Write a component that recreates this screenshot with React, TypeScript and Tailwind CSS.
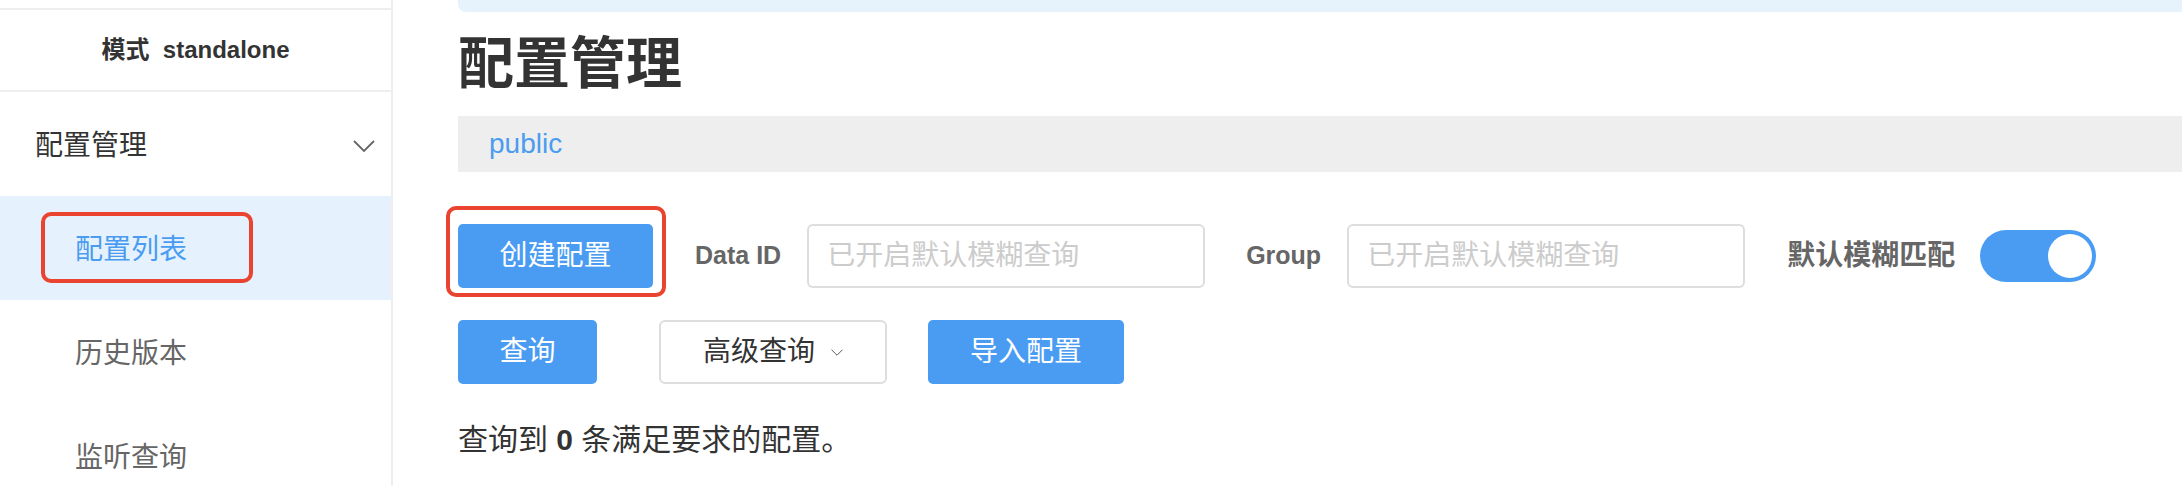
import React from 'react';

const cjk = { fontFamily: '"Liberation Sans", "Noto Sans CJK SC", sans-serif' };

function Chevron({ className }: { className?: string }) {
  return (
    <svg viewBox="0 0 22 12" className={className} fill="none">
      <polyline points="1,1 11,11 21,1" stroke="currentColor" strokeWidth="1.8" />
    </svg>
  );
}

function Sidebar() {
  return (
    <aside className="w-[393px] shrink-0 border-r-2 border-[#eee] h-[486px] overflow-hidden bg-white">
      <div className="h-[8px]" />
      <div className="h-[84px] border-y-2 border-[#eee] flex items-center justify-center text-[24px] font-bold text-[#333]">
        模式&nbsp;&nbsp;standalone
      </div>
      <div className="h-[104px] flex items-center justify-between pl-[35px] pr-[16px] pt-[4px] text-[28px] text-[#333]">
        <span>配置管理</span>
        <Chevron className="w-[22px] h-[12px] text-[#666]" />
      </div>
      <div className="relative h-[104px] flex items-center pl-[75px] pt-[4px] bg-[#e5f2fd] text-[28px] text-[#4a9cf0]">
        配置列表
        {/* annotation box */}
        <div className="absolute left-[41px] top-[16px] w-[212px] h-[71px] border-4 border-[#ea4330] rounded-[10px]" />
      </div>
      <div className="h-[104px] flex items-center pl-[75px] pt-[4px] text-[28px] text-[#666]">历史版本</div>
      <div className="h-[104px] flex items-center pl-[75px] pt-[4px] text-[28px] text-[#666]">监听查询</div>
    </aside>
  );
}

export default function App() {
  return (
    <div className="flex w-[2182px] h-[486px] overflow-hidden bg-white" style={cjk}>
      <Sidebar />

      <main className="flex-1 pl-[65px]">
        <div className="h-[12px] bg-[#e6f3fd] rounded-bl-[8px]" />

        <h1 className="mt-[24px] h-[56px] leading-[56px] text-[56px] font-bold text-[#333]">配置管理</h1>

        <div className="mt-[24px] h-[56px] flex items-center pl-[31px] bg-[#eee] text-[28px] text-[#4a9cf0]">
          public
        </div>

        {/* search row */}
        <div className="mt-[52px] flex items-center h-[64px]">
          <div className="relative">
            <button className="w-[195px] h-[64px] rounded-[5px] bg-[#4a9cf2] text-white text-[28px]">创建配置</button>
            <div className="absolute -left-[12px] -top-[18px] w-[220px] h-[91px] border-4 border-[#ea4330] rounded-[10px]" />
          </div>

          <span className="ml-[42px] mr-[26px] text-[25px] font-bold text-[#666]">Data ID</span>
          <div className="w-[398px] h-[64px] border-2 border-[#ddd] rounded-[6px] flex items-center pl-[18px] text-[28px] text-[#ccc]">
            已开启默认模糊查询
          </div>

          <span className="ml-[41px] mr-[26px] text-[25px] font-bold text-[#666]">Group</span>
          <div className="w-[398px] h-[64px] border-2 border-[#ddd] rounded-[6px] flex items-center pl-[18px] text-[28px] text-[#ccc]">
            已开启默认模糊查询
          </div>

          <span className="ml-[42px] mr-[25px] text-[28px] font-bold text-[#666]">默认模糊匹配</span>
          <div className="relative w-[116px] h-[52px] rounded-full bg-[#4a9cf2]">
            <div className="absolute right-[4px] top-[4px] w-[44px] h-[44px] rounded-full bg-white" />
          </div>
        </div>

        {/* action row */}
        <div className="mt-[32px] flex items-center h-[64px]">
          <button className="w-[139px] h-[64px] rounded-[5px] bg-[#4a9cf2] text-white text-[28px]">查询</button>
          <button className="ml-[62px] w-[228px] h-[64px] rounded-[6px] border-2 border-[#ddd] bg-white text-[#333] text-[28px] flex items-center justify-center gap-[16px]">
            <span>高级查询</span>
            <Chevron className="w-[12px] h-[7px] text-[#555]" />
          </button>
          <button className="ml-[41px] w-[196px] h-[64px] rounded-[5px] bg-[#4a9cf2] text-white text-[28px]">导入配置</button>
        </div>

        <p className="mt-[41px] h-[30px] leading-[30px] text-[30px] text-[#333]">
          查询到 <span className="font-bold">0</span> 条满足要求的配置。
        </p>
      </main>
    </div>
  );
}
